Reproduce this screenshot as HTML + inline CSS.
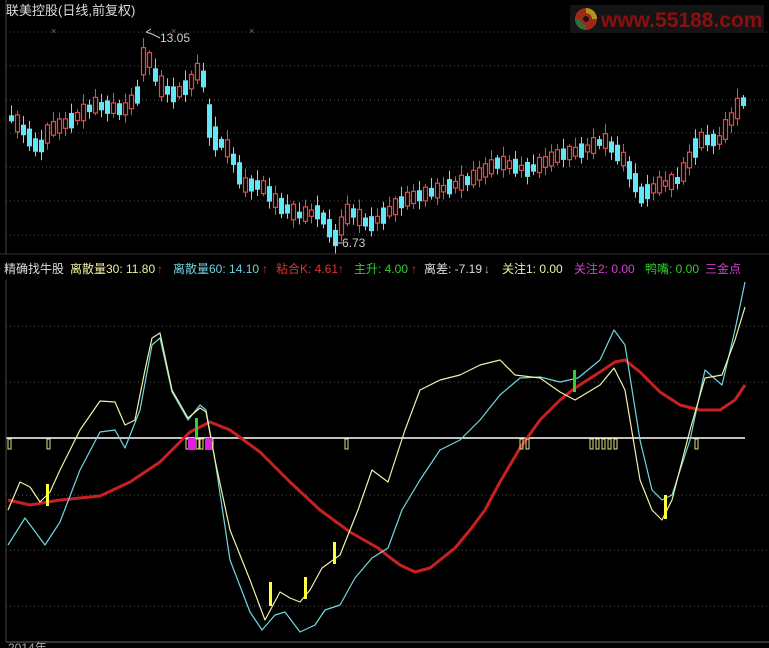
<!DOCTYPE html>
<html><head><meta charset="utf-8"><style>
html,body{margin:0;padding:0;background:#000;width:769px;height:648px;overflow:hidden}
svg{display:block}
text{font-family:"Liberation Sans","Noto Sans CJK SC",sans-serif;font-size:12px}
</style></head><body>
<svg id="s" width="769" height="648" xmlns="http://www.w3.org/2000/svg">
<rect width="769" height="648" fill="#000"/>
<g id="grid" stroke="#555" stroke-dasharray="1,3" stroke-width="1"></g>
<g id="candles"></g>
<line x1="6" y1="438" x2="745" y2="438" stroke="#fff" stroke-width="1.5"/>
<g id="ind"></g>
<line x1="0" y1="254" x2="769" y2="254" stroke="#333"/>
<line x1="6" y1="642" x2="769" y2="642" stroke="#666"/>
<line x1="6" y1="0" x2="6" y2="254" stroke="#444"/>
<line x1="6" y1="280" x2="6" y2="642" stroke="#444"/>
<text x="6" y="15" fill="#ddd" style="font-size:13px">联美控股(日线,前复权)</text>
<text x="160" y="42" fill="#ccc">13.05</text>
<path d="M146 32 l5 -3 M146 32 l6 2 l8 4" stroke="#ccc" fill="none"/>
<text x="342" y="247" fill="#ccc">6.73</text>
<path d="M333 243 h9 M333 243 l3 -2 M333 243 l3 2" stroke="#ccc" fill="none"/>
<g><text x="51" y="34" style="font-size:9px" fill="#c040c0">×</text><text x="171" y="34" style="font-size:9px" fill="#c040c0">×</text><text x="249" y="34" style="font-size:9px" fill="#c040c0">×</text><text x="640" y="34" style="font-size:9px" fill="#c040c0">×</text><text x="737" y="34" style="font-size:9px" fill="#c040c0">×</text></g>
<rect x="570" y="5" width="194" height="28" fill="#161616" opacity="0.9"/>
<circle cx="586" cy="19" r="11" fill="#a02818"/>
<path d="M586 8 a11 11 0 0 1 11 11 h-5 a6 6 0 0 0 -6 -6z" fill="#b89020"/>
<path d="M575 19 a11 11 0 0 0 11 11 v-5 a6 6 0 0 1 -6 -6z" fill="#2a7038"/>
<circle cx="586" cy="19" r="3" fill="#161616"/>
<text x="601" y="27" fill="#8a1010" style="font-size:21px;font-weight:bold">www.55188.com</text>
<text x="4" y="273" fill="#ddd">精确找牛股</text>
<text x="70" y="273" fill="#f0f0a0">离散量30: 11.80</text><text x="157" y="273" fill="#e03030">↑</text>
<text x="173" y="273" fill="#70d0e0">离散量60: 14.10</text><text x="262" y="273" fill="#e03030">↑</text>
<text x="276" y="273" fill="#e03030">粘合K: 4.61↑</text>
<text x="354" y="273" fill="#30d030">主升: 4.00</text><text x="411" y="273" fill="#e03030">↑</text>
<text x="424" y="273" fill="#ddd">离差: -7.19</text><text x="484" y="273" fill="#70d0e0">↓</text>
<text x="502" y="273" fill="#f0f0a0">关注1: 0.00</text>
<text x="574" y="273" fill="#d040d0">关注2: 0.00</text>
<text x="645" y="273" fill="#30d030">鸭嘴: 0.00</text>
<text x="705" y="273" fill="#d040d0">三金点</text>
<text x="8" y="652" fill="#aaa">2014年</text>
</svg>
<script>
(function(){
var NS="http://www.w3.org/2000/svg";
function el(p,t,a){var e=document.createElementNS(NS,t);for(var k in a)e.setAttribute(k,a[k]);p.appendChild(e);return e;}
var g=document.getElementById('grid');
[32,66,100,133,167,201,235,326,382,495,550,606].forEach(function(y){el(g,'line',{x1:6,y1:y,x2:769,y2:y});});
function interp(pts,x){for(var j=0;j<pts.length-1;j++){var a=pts[j],b=pts[j+1];if(x>=a[0]&&x<=b[0]){return a[1]+(b[1]-a[1])*(x-a[0])/(b[0]-a[0]);}}return pts[x<pts[0][0]?0:pts.length-1][1];}
var price=[[8,115],[20,125],[40,150],[50,130],[70,122],[95,105],[125,110],[138,95],[146,50],[160,85],[175,95],[190,85],[202,65],[212,135],[230,150],[245,185],[262,185],[280,205],[300,215],[320,212],[336,238],[350,210],[370,225],[385,215],[405,200],[440,190],[470,180],[500,162],[530,170],[560,155],[585,150],[605,140],[625,160],[642,195],[660,185],[680,180],[700,140],[720,140],[740,105],[746,100]];
var c=document.getElementById('candles');
var prev=interp(price,8);
for(var x=9,i=0;x<=746;x+=6,i++){
 var m=interp(price,x+3);var d=m-prev;
 var body=4+Math.abs(Math.sin(i*1.7))*10+Math.abs(d)*0.6;
 var up=(d<0)?(Math.sin(i*2.3)>-0.6):(Math.sin(i*2.3)>0.6);
 var ty=m-body/2,by=m+body/2;
 var wt=ty-2-Math.abs(Math.cos(i*1.3))*8,wb=by+2+Math.abs(Math.sin(i*0.9))*6;
 var col=up?'#e84848':'#60e8f8';
 el(c,'line',{x1:x+2.5,y1:wt,x2:x+2.5,y2:wb,stroke:col});
 if(up)el(c,'rect',{x:x+0.5,y:ty,width:4,height:body,fill:'#000',stroke:col,'stroke-width':1.2});
 else el(c,'rect',{x:x,y:ty,width:5,height:body,fill:col});
 prev=m;
}
var Y=[[8,510],[20,482],[30,487],[40,502],[50,492],[60,470],[80,430],[100,401],[115,402],[125,425],[135,420],[145,370],[152,338],[160,333],[172,390],[188,418],[200,408],[206,412],[215,460],[230,530],[250,580],[265,620],[280,592],[290,598],[300,602],[310,590],[322,568],[340,555],[358,510],[372,470],[388,482],[405,430],[420,390],[440,380],[460,375],[480,365],[500,360],[515,375],[540,378],[560,392],[575,400],[600,385],[614,368],[625,390],[640,480],[652,510],[662,520],[672,500],[690,430],[705,378],[722,375],[735,340],[745,307]];
var C=[[8,545],[25,518],[45,545],[60,522],[80,470],[100,432],[115,430],[125,448],[140,410],[152,345],[160,338],[172,392],[188,420],[200,405],[206,410],[215,460],[230,560],[250,612],[262,630],[275,615],[285,612],[300,632],[315,625],[325,610],[340,605],[355,578],[372,558],[388,548],[402,510],[420,480],[440,450],[460,440],[480,420],[500,395],[520,378],[540,377],[560,382],[578,378],[600,360],[614,330],[625,345],[640,440],[652,490],[662,500],[672,495],[690,440],[705,370],[722,385],[735,330],[745,282]];
var R=[[8,500],[30,505],[60,500],[100,496],[130,482],[160,462],[190,432],[210,422],[230,430],[260,452],[290,482],[320,510],[350,532],[378,548],[388,556],[400,565],[415,572],[430,568],[440,560],[455,548],[470,530],[485,510],[500,482],[520,448],[540,420],[560,400],[575,388],[600,372],[615,362],[625,360],[640,372],[660,392],[680,405],[700,410],[720,410],[735,400],[745,385]];
var ind=document.getElementById('ind');
function pl(p,col,w){el(ind,'polyline',{points:p.map(function(a){return a.join(',')}).join(' '),fill:'none',stroke:col,'stroke-width':w,'stroke-linejoin':'round'});}
pl(R,'#c82020',3);pl(C,'#70d8e0',1.2);pl(Y,'#f0f0a8',1.2);
[8,47,186,190,196,200,210,345,520,526,590,596,602,608,614,695].forEach(function(a){el(ind,'rect',{x:a,y:439,width:3,height:10,fill:'none',stroke:'#e0e080'});});
[[188,438,7,12,'#e020e0'],[205,438,7,12,'#e020e0'],[195,418,3,20,'#30d030'],[573,370,3,22,'#30d030'],[46,484,3,22,'#ffff40'],[269,582,3,24,'#ffff40'],[304,577,3,22,'#ffff40'],[333,542,3,22,'#ffff40'],[664,495,3,24,'#ffff40']].forEach(function(a){el(ind,'rect',{x:a[0],y:a[1],width:a[2],height:a[3],fill:a[4]});});
})();
</script>
</body></html>
